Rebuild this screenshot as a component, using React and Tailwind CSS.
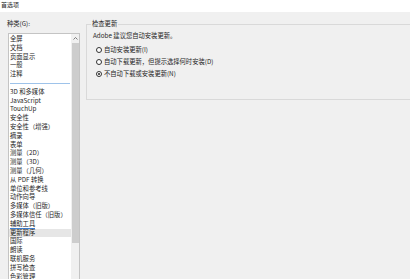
import React from 'react';

const FONT = { fontFamily: '"Noto Sans CJK SC", "Noto Sans", sans-serif' };

const CATEGORIES_TOP = ['全屏', '文档', '页面显示', '一般', '注释'];
const CATEGORIES = [
  '3D 和多媒体',
  'JavaScript',
  'TouchUp',
  '安全性',
  '安全性（增强）',
  '摘录',
  '表单',
  '测量（2D）',
  '测量（3D）',
  '测量（几何）',
  '从 PDF 转换',
  '单位和参考线',
  '动作向导',
  '多媒体（旧版）',
  '多媒体信任（旧版）',
  '辅助工具',
  '更新程序',
  '国际',
  '朗读',
  '联机服务',
  '拼写检查',
  '色彩管理',
];

const Item = ({ label, selected, focused }) => (
  <div
    className={`h-[8.8px] leading-[8.8px] pl-[1px] whitespace-nowrap ${selected ? 'bg-[#e6e6e6]' : ''}`}
  >
    <span className={focused ? 'border-b border-[#3c7fd1]' : ''}>{label}</span>
  </div>
);

const Radio = ({ label, checked }) => (
  <div className="flex items-center h-[12px] gap-[2px]">
    <span className="w-[6px] h-[6px] rounded-full border border-[#333] bg-white flex items-center justify-center">
      {checked && <span className="w-[2.5px] h-[2.5px] rounded-full bg-[#222]" />}
    </span>
    <span>{label}</span>
  </div>
);

export default function App() {
  return (
    <div className="w-[410px] h-[279px] overflow-hidden bg-[#f0f0f0] text-[#262626] text-[6.3px]" style={FONT}>
      {/* 标题栏 */}
      <div className="h-[12px] bg-white pl-[1px] pt-[1px] leading-[8px] text-[6px]">首选项</div>

      <div className="flex">
        {/* 左侧种类列表 */}
        <div className="w-[80px] pl-[8px] pt-[8px] shrink-0">
          <div className="h-[8px] leading-[8px] -ml-[1px]">种类(G):</div>
          <div className="mt-[5px] h-[262px] bg-white border border-[#c4c4c4] flex overflow-hidden">
            <div className="flex-1 pt-[1px] min-w-0">
              {CATEGORIES_TOP.map((c) => (
                <Item key={c} label={c} />
              ))}
              <div className="h-[8.8px] flex items-center px-[1px]">
                <div className="h-px w-full bg-[#9ec3ea]" />
              </div>
              {CATEGORIES.map((c) => (
                <Item key={c} label={c} selected={c === '更新程序'} focused={c === '辅助工具'} />
              ))}
            </div>
            {/* 滚动条 */}
            <div className="w-[8px] bg-[#f0f0f0] flex flex-col items-center">
              <div className="h-[9px] flex items-center justify-center">
                <svg width="5" height="3" viewBox="0 0 5 3">
                  <path d="M0.5 2.5 L2.5 0.5 L4.5 2.5" fill="none" stroke="#606060" strokeWidth="0.8" />
                </svg>
              </div>
              <div className="w-[7px] h-[200px] bg-[#cdcdcd]" />
            </div>
          </div>
        </div>

        {/* 右侧设置面板 */}
        <div className="pl-[6px] pt-[8px] shrink-0">
          <fieldset className="w-[340px] border border-[#d9d9d9] px-[4px] pb-[19px]">
            <legend className="px-[1px] leading-[8px]">检查更新</legend>
            <div className="pl-[2px] pt-[2px] h-[13px] leading-[12px]">Adobe 建议您自动安装更新。</div>
            <div className="pl-[5px] pt-[3px]">
              <Radio label="自动安装更新(I)" />
              <Radio label="自动下载更新，但提示选择何时安装(D)" />
              <Radio label="不自动下载或安装更新(N)" checked />
            </div>
          </fieldset>
        </div>
      </div>
    </div>
  );
}
